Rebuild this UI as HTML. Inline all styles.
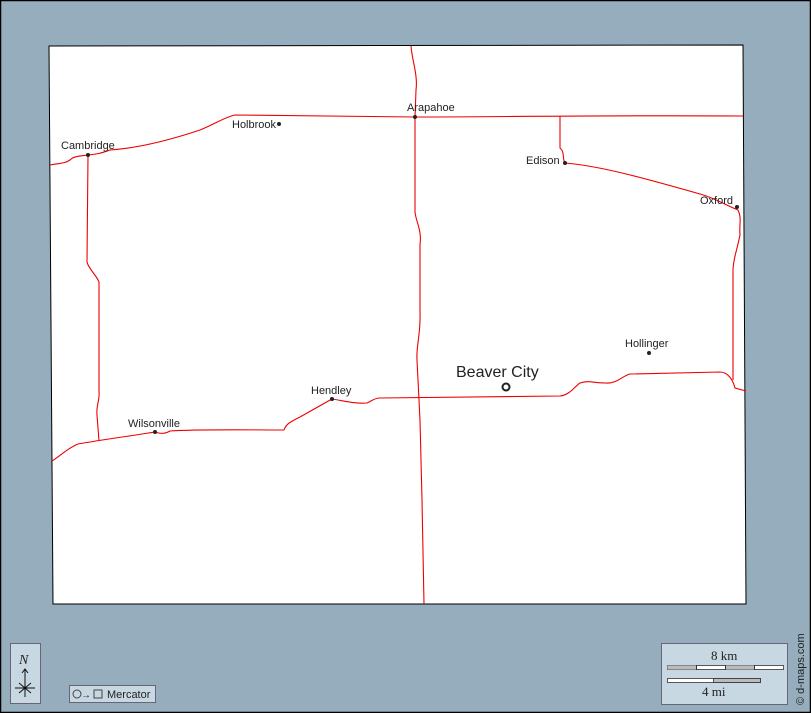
<!DOCTYPE html>
<html><head><meta charset="utf-8"><style>
html,body{margin:0;padding:0;background:#95adbd;}
svg{display:block;}
text{font-family:"Liberation Sans",sans-serif;fill:#222;}
</style></head><body>
<svg width="811" height="713" viewBox="0 0 811 713" xmlns="http://www.w3.org/2000/svg">
<rect x="0.5" y="0.5" width="810" height="712" fill="#95adbd" stroke="#000" stroke-width="1.5"/>
<polygon points="49,46 743,45 746,604 53,604" fill="#fff" stroke="#000" stroke-width="1"/>
<g fill="none" stroke="#e00" stroke-width="1.1">
<path d="M50,165 C62,163 66,163 70,160 C74,156 80,156 88,155 C100,154 104,152 110,150 C140,148 170,140 200,130 C215,124 225,117 235,115 L415,117 C500,117 600,115 743,116"/>
<path d="M411,46 C412,60 418,75 416,90 L415,117 L415,212 C416,222 422,230 420,245 L420,310 C421,335 416,345 417,360 L420,420 L422,500 L424,604"/>
<path d="M88,155 L87,262 C88,268 97,276 99,282 L99,392 C100,400 96,405 97,415 L99,441"/>
<path d="M52,461 C60,456 68,448 78,444 C100,440 130,436 155,432 C160,434 165,434 170,431 C200,429 250,430 284,430 C286,424 290,422 300,417 L332,399 C345,401 355,404 367,403 C372,401 374,398 380,398 L560,396 C570,395 575,386 580,383 C588,380 595,383 605,383 C617,384 622,376 630,374 L720,372 C728,372 733,380 735,388 L746,391"/>
<path d="M560,116 L560,148 C565,152 562,158 565,163 C600,166 640,177 700,194 C715,198 725,205 738,210 C742,218 739,225 740,235 C737,250 733,260 733,270 L733,380"/>
</g>
<g fill="#222">
<circle cx="88" cy="155" r="2"/><circle cx="279" cy="124" r="2"/><circle cx="415" cy="117" r="2"/>
<circle cx="565" cy="163" r="2"/><circle cx="737" cy="207" r="2"/><circle cx="649" cy="353" r="2"/>
<circle cx="332" cy="399" r="2"/><circle cx="155" cy="432" r="2"/>
</g>
<circle cx="506" cy="387" r="3.5" fill="none" stroke="#222" stroke-width="2"/>
<g font-size="11">
<text x="61" y="149">Cambridge</text>
<text x="232" y="128">Holbrook</text>
<text x="407" y="111">Arapahoe</text>
<text x="526" y="164">Edison</text>
<text x="700" y="204">Oxford</text>
<text x="625" y="347">Hollinger</text>
<text x="311" y="394">Hendley</text>
<text x="128" y="427">Wilsonville</text>
</g>
<text x="456" y="377" font-size="16">Beaver City</text>
<rect x="10.5" y="643.5" width="30" height="60" fill="#c8d8e2" stroke="#667"/>
<text x="19" y="664" font-size="14" font-style="italic" font-family="Liberation Serif,serif" style="font-family:'Liberation Serif',serif">N</text>
<path d="M25,669 V697 M22,673 L25,669 L28,673 M15,688 H35 M19,683 L31,693 M19,693 L31,683" stroke="#111" fill="none" stroke-width="1"/>
<circle cx="25" cy="688" r="1.5" fill="#111"/>
<rect x="69.5" y="685.5" width="86" height="17" fill="#c8d8e2" stroke="#667"/>
<circle cx="77" cy="694" r="4" fill="none" stroke="#444"/>
<text x="81" y="698" font-size="10">→</text>
<rect x="94" y="690" width="8" height="8" fill="none" stroke="#444"/>
<text x="107" y="698" font-size="11">Mercator</text>
<rect x="661.5" y="643.5" width="126" height="61" fill="#c8d8e2" stroke="#667"/>
<text x="711" y="660" font-size="13" style="font-family:'Liberation Serif',serif">8 km</text>
<rect x="667.5" y="665.5" width="116" height="4" fill="#fff" stroke="#333" stroke-width="0.8"/>
<rect x="667.5" y="665.5" width="29" height="4" fill="#bbb"/><rect x="725.5" y="665.5" width="29" height="4" fill="#bbb"/>
<path d="M696.5,665 v5 M725.5,665 v5 M754.5,665 v5" stroke="#333"/>
<rect x="667.5" y="678.5" width="93" height="4" fill="#fff" stroke="#333" stroke-width="0.8"/>
<rect x="713.5" y="678.5" width="47" height="4" fill="#bbb" stroke="#333" stroke-width="0.8"/>
<text x="702" y="696" font-size="13" style="font-family:'Liberation Serif',serif">4 mi</text>
<text transform="translate(804,705) rotate(-90)" font-size="11">© d-maps.com</text>
</svg>
</body></html>
